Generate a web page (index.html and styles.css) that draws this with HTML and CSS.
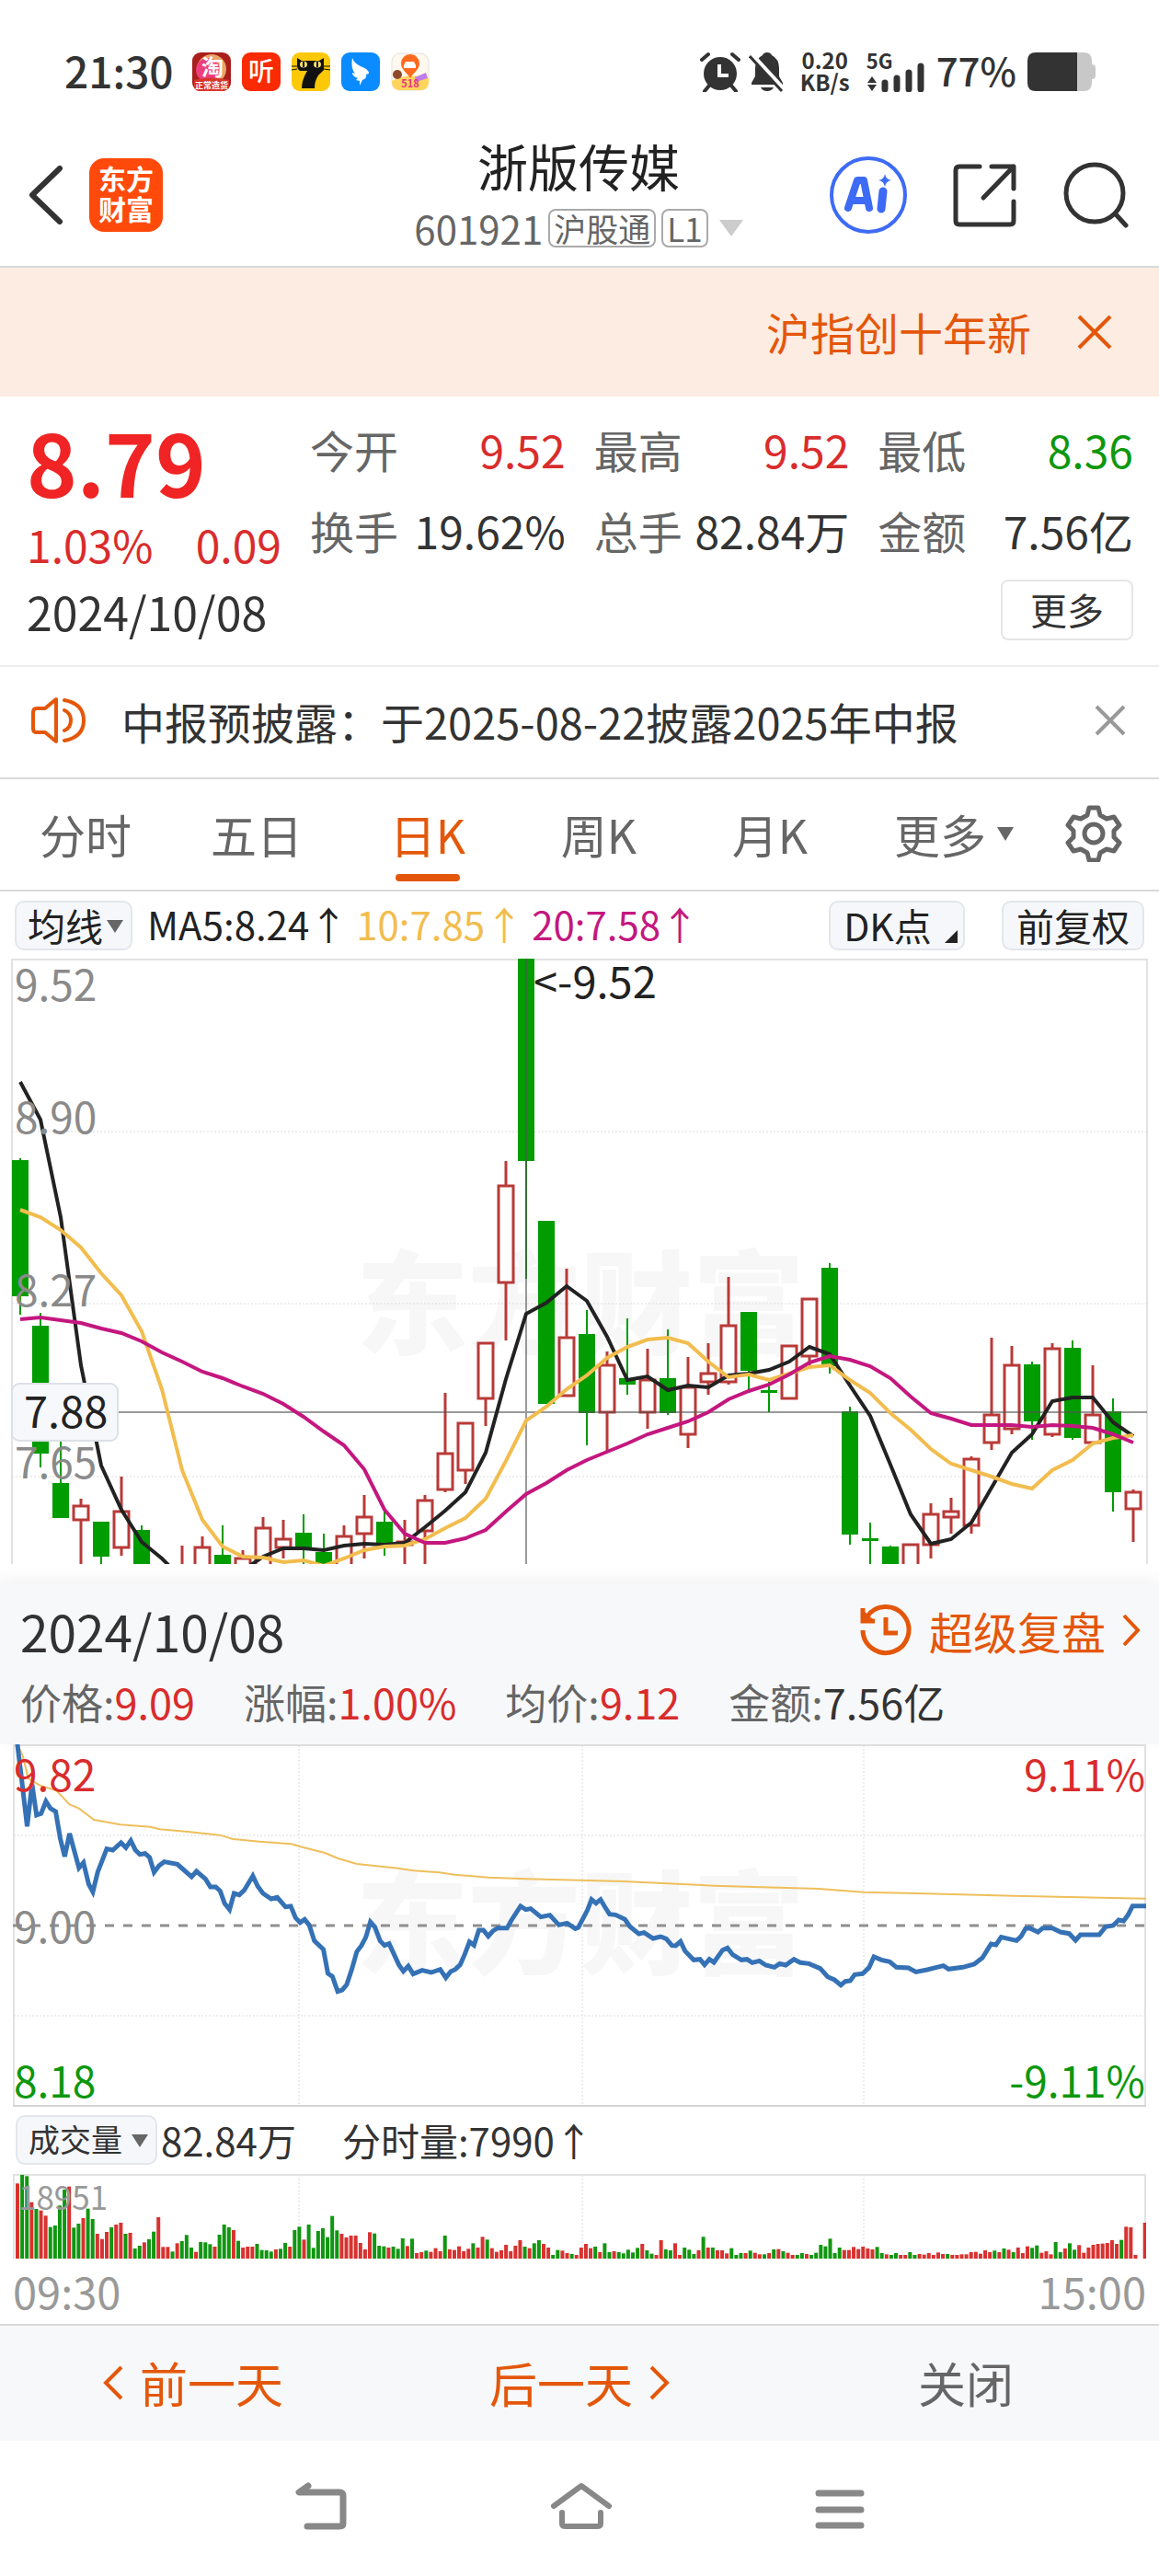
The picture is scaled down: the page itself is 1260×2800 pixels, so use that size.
FILE: index.html
```html
<!DOCTYPE html>
<html lang="zh-CN">
<head>
    <meta charset="UTF-8">
    <meta name="viewport" content="width=device-width, initial-scale=1">
    <title>浙版传媒 601921</title>
    <link rel="stylesheet" href="styles.css">
</head>
<body>

<div class="status">
    <span class="status_time">21:30</span>
    <div class="status_apps">
        <svg width="42" height="42" viewBox="0 0 42 42">
            <rect width="42" height="42" rx="9" fill="#a81f1c"/>
            <circle cx="21" cy="18" r="16" fill="#e9a46b"/>
            <circle cx="17" cy="19" r="13" fill="#ee3f7c"/>
            <path d="M2 30q19-5 38 0v8q-3 4-8 4H9q-6 0-7-4z" fill="#d8352a"/>
            <text class="app_glyph" x="22" y="25" font-size="24">淘</text>
            <text class="app_glyph" x="21" y="39" font-size="9">正常造货</text>
        </svg>
        <svg width="42" height="42" viewBox="0 0 42 42">
            <rect width="42" height="42" rx="9" fill="#fa2a05"/>
            <text class="app_glyph thin" x="21" y="31" font-size="28">听</text>
        </svg>
        <svg width="42" height="42" viewBox="0 0 42 42">
            <rect width="42" height="42" rx="9" fill="#fbc908"/>
            <path d="M6 6l5 3h19l5-3v13q-3 3-6 6-4 6-4 14H11q0-9 6-19H9q-3-2-3-5z" fill="#111"/>
            <path d="M0 15h6M0 19l6-1M35 15h7M35 18l7 1" stroke="#111"/>
            <ellipse cx="13" cy="13" rx="4" ry="3.500" fill="#f5e06a"/>
            <ellipse cx="28" cy="13" rx="4" ry="3.500" fill="#f5e06a"/>
            <path d="M13 10v6M28 10v6" stroke="#111" stroke-width="2"/>
        </svg>
        <svg width="42" height="42" viewBox="0 0 42 42">
            <rect width="42" height="42" rx="9" fill="#0a8bff"/>
            <path d="M12 6q2 6 9 9 9 3 9 8l-3 1q1 3-2 5l-2 1-3 6v-5l-4-1 2-2q-6-2-6-6l3 1q-5-6-3-17z" fill="#fff"/>
        </svg>
        <svg width="42" height="42" viewBox="0 0 42 42">
            <rect x="1" y="1" width="40" height="40" rx="9" fill="#fff8ee" stroke="#e3dfdb"/>
            <path d="M1 31q18-9 40-3v4q0 9-9 9H10q-9 0-9-9z" fill="#ffd45c"/>
            <circle cx="7" cy="24" r="5" fill="#8d4a2b"/>
            <path d="M26 27l12-5 2 6-13 4z" fill="#c07be8"/>
            <path d="M21 2c6 0 10 5 10 10 0 7-7 10-10 16-3-6-10-9-10-16 0-5 4-10 10-10z" fill="#ff6a1f"/>
            <path d="M14 14l2-4h9l2 4v3H14z" fill="#fff"/>
            <text class="app_glyph pink" x="21" y="38" font-size="11">518</text>
        </svg>
    </div>
    <div class="status_right">
        <svg width="44" height="44" viewBox="0 0 44 44">
            <circle cx="22" cy="24" r="18" fill="#333"/>
            <path d="M2 9l7-6M42 9l-7-6M10 37l-5 6M34 37l5 6" stroke="#333" stroke-width="4" stroke-linecap="round"/>
            <path d="M21 14v12h10" fill="none" stroke="#fff" stroke-width="4"/>
        </svg>
        <svg class="bell" width="40" height="44" viewBox="0 0 40 44">
            <path d="M20 1q4 0 5 3 8 4 8 14v9l4 7v2H3v-2l4-7v-9Q7 8 15 4q1-3 5-3zM13 39h14q-2 4-7 4t-7-4z" fill="#333"/>
            <path d="M3 3l35 38" stroke="#fff" stroke-width="5"/>
            <path d="M1 5l35 38" stroke="#333" stroke-width="3"/>
        </svg>
        <div class="speed"><span>0.20</span><span>KB/s</span></div>
        <div class="signal">
            <span>5G</span>
            <svg width="66" height="44" viewBox="0 0 66 44">
                <path d="M1 34l5-7 5 7zM1 36l5 7 5-7z" fill="#333"/>
                <path d="M20 34v7M33 29v12M46 23v18M59 16v25" stroke="#333" stroke-width="7" stroke-linecap="round"/>
            </svg>
        </div>
        <span class="percent">77%</span>
        <svg width="74" height="42" viewBox="0 0 74 42">
            <path d="M53 0h8q9 0 9 9v4q4 0 4 4v8q0 4-4 4v4q0 9-9 9h-8z" fill="#c8c8c8"/>
            <path d="M9 0h45v42H9q-9 0-9-9V9q0-9 9-9z" fill="#333"/>
        </svg>
    </div>
</div>

<header class="header">
    <div class="header_side">
        <button class="icon_btn" aria-label="返回">
            <svg width="40" height="64" viewBox="0 0 40 64"><path d="M35 3L5 32l30 29" fill="none" stroke="#333" stroke-width="6" stroke-linecap="round" stroke-linejoin="round"/></svg>
        </button>
        <div class="logo">东方<br>财富</div>
    </div>
    <div class="header_mid">
        <h1>浙版传媒</h1>
        <div class="code">
            <span>601921</span>
            <span class="tag">沪股通</span>
            <span class="tag">L1</span>
            <svg width="26" height="18" viewBox="0 0 26 18"><path d="M0 0h26L13 18z" fill="#ccc"/></svg>
        </div>
    </div>
    <div class="header_side right">
        <button class="icon_btn" aria-label="AI">
            <svg width="84" height="84" viewBox="0 0 84 84">
                <circle cx="42" cy="42" r="40" fill="none" stroke="#3d6bf5" stroke-width="4"/>
                <path d="M20 56l10-30h7l6 30M25 48h15" fill="none" stroke="#3d6bf5" stroke-width="8" stroke-linejoin="round" stroke-linecap="round"/>
                <path d="M58 38l-2 19" stroke="#3d6bf5" stroke-width="9" stroke-linecap="round"/>
                <path d="M60 19q1 6 7 7-6 1-7 7-1-6-7-7 6-1 7-7z" fill="#3d6bf5"/>
            </svg>
        </button>
        <button class="icon_btn" aria-label="分享">
            <svg width="70" height="70" viewBox="0 0 70 70"><path d="M29 4H7q-4 0-4 4v55q0 4 4 4h55q4 0 4-4V42M42 4h24v24M66 4L33 38" fill="none" stroke="#333" stroke-width="5" stroke-linecap="round" stroke-linejoin="round"/></svg>
        </button>
        <button class="icon_btn" aria-label="搜索">
            <svg width="72" height="72" viewBox="0 0 72 72"><circle cx="34" cy="34" r="31" fill="none" stroke="#333" stroke-width="5"/><path d="M57 57l11 12" stroke="#333" stroke-width="5" stroke-linecap="round"/></svg>
        </button>
    </div>
</header>

<div class="banner">
    <div class="banner_text">沪指创十年新</div>
    <button class="icon_btn" aria-label="关闭">
        <svg width="40" height="40" viewBox="0 0 40 40"><path d="M3 3l34 34M37 3L3 37" stroke="#e4570a" stroke-width="4"/></svg>
    </button>
</div>

<section class="quote">
    <div class="price">
        <div class="price_now">8.79</div>
        <div class="price_diff"><span>1.03%</span><span>0.09</span></div>
    </div>
    <dl class="facts">
        <div><dt>今开</dt><dd class="up">9.52</dd></div>
        <div><dt>最高</dt><dd class="up">9.52</dd></div>
        <div><dt>最低</dt><dd class="down">8.36</dd></div>
        <div><dt>换手</dt><dd>19.62%</dd></div>
        <div><dt>总手</dt><dd>82.84万</dd></div>
        <div><dt>金额</dt><dd>7.56亿</dd></div>
    </dl>
    <div class="quote_date">2024/10/08</div>
    <button class="more_btn">更多</button>
</section>

<div class="notice">
    <svg width="60" height="52" viewBox="0 0 60 52">
        <path d="M27 3v46L15 39H6q-4 0-4-4V17q0-4 4-4h9zM36 15q7 3 7 11t-7 11M36 4q21 4 21 22T36 48" fill="none" stroke="#e4570a" stroke-width="4" stroke-linejoin="round" stroke-linecap="round"/>
    </svg>
    <a href="#">中报预披露：于2025-08-22披露2025年中报</a>
    <button class="icon_btn" aria-label="关闭">
        <svg width="34" height="34" viewBox="0 0 34 34"><path d="M2 2l30 30M32 2L2 32" stroke="#999" stroke-width="4"/></svg>
    </button>
</div>

<nav class="tabs">
    <button>分时</button>
    <button>五日</button>
    <button class="active">日K</button>
    <button>周K</button>
    <button>月K</button>
    <button>更多<svg width="18" height="15" viewBox="0 0 18 15"><path d="M0 0h18L9 15z" fill="#666"/></svg></button>
    <button class="gear" aria-label="设置">
        <svg width="62" height="62" viewBox="0 0 62 62">
            <path d="M26 3h10l2 8 7 4 8-2 6 9-6 6v7l6 6-6 9-8-2-7 4-2 8H26l-2-8-7-4-8 2-6-9 6-6v-7l-6-6 6-9 8 2 7-4z" fill="none" stroke="#666" stroke-width="5" stroke-linejoin="round"/>
            <circle cx="31" cy="31" r="10" fill="none" stroke="#666" stroke-width="5"/>
        </svg>
    </button>
</nav>

<div class="ma_row">
    <label class="picker">
        <select aria-label="指标"><option>均线</option></select>
    </label>
    <div class="ma_list"><span>MA5:8.24↑</span><span class="ma10">10:7.85↑</span><span class="ma20">20:7.58↑</span></div>
    <button class="chip corner">DK点</button>
    <button class="chip">前复权</button>
</div>

<svg class="chart kline" viewBox="0 0 1236 658">
    <text class="watermark" x="619" y="420">东方财富</text>
    <path class="frame" d="M1 658V1h1234v657"/>
    <path class="grid" d="M1 188h1234M1 375h1234M1 563h1234"/>
    <g id="candles"></g>
    <path class="cross" d="M1 493h1234M560 0v658"/>
    <g id="ma"></g>
    <g class="axis">
        <text x="4" y="46">9.52</text>
        <text x="4" y="190">8.90</text>
        <text x="4" y="378">8.27</text>
        <text x="4" y="565">7.65</text>
    </g>
    <text class="peak" x="568" y="43">&lt;-9.52</text>
    <rect class="cross_box" x="1" y="462" width="115" height="62" rx="8"/>
    <text class="peak" x="14" y="510">7.88</text>
</svg>

<section class="replay">
    <div class="replay_head">
        <span class="replay_date">2024/10/08</span>
        <a href="#">
            <svg width="58" height="58" viewBox="0 0 58 58">
                <path d="M8 15A25 25 0 1 1 4 29M4 5v14h13M29 15v17h13" fill="none" stroke="#e4570a" stroke-width="5"/>
                <path d="M3 6l14 13H3z" fill="#e4570a"/>
            </svg>
            <span>超级复盘</span>
            <svg width="20" height="36" viewBox="0 0 20 36"><path d="M2 2l15 16L2 34" fill="none" stroke="#e4570a" stroke-width="4"/></svg>
        </a>
    </div>
    <div class="replay_stats">
        <span>价格:<b class="up">9.09</b></span>
        <span>涨幅:<b class="up">1.00%</b></span>
        <span>均价:<b class="up">9.12</b></span>
        <span>金额:<b>7.56亿</b></span>
    </div>
</section>

<svg class="chart minute" viewBox="0 0 1232 394">
    <text class="watermark" x="617" y="240">东方财富</text>
    <path class="frame" d="M1 394V1h1230v393"/>
    <path class="frame base" d="M0 393h1232"/>
    <path class="grid" d="M1 99h1230M1 295h1230M311 1v392M619 1v392M925 1v392"/>
    <path class="mid" d="M0 197h1232"/>
    <svg width="1232" height="394" viewBox="34 49 3018 1182" preserveAspectRatio="none">
        <polyline class="avg" points="46,49 60,85 75,160 105,182 150,200 185,245 210,258 250,295 320,311 400,318 425,326 500,334 585,345 620,358 690,366 775,374 800,383 865,403 900,421 950,439 1060,453 1100,461 1170,467 1210,474 1300,483 1400,488 1568,493 1660,496 1900,510 2180,520 2300,531 2700,543 3052,552"/>
        <polyline class="now" points="46,49 59,180 72,317 85,178 97,280 109,275 122,235 134,258 148,268 160,355 172,415 185,340 210,452 222,435 236,505 247,530 260,465 284,390 300,394 322,370 335,386 348,363 360,393 372,408 386,405 398,418 410,466 423,445 437,432 472,440 485,454 510,481 523,463 547,488 560,514 574,514 586,527 598,568 611,588 623,535 637,540 650,525 673,478 686,512 700,535 722,553 738,548 760,579 774,577 787,615 799,630 811,620 823,638 837,690 861,718 873,796 885,806 899,855 911,850 923,833 936,785 950,725 962,706 974,678 986,628 998,645 1012,690 1024,705 1036,699 1062,768 1074,789 1087,772 1100,798 1124,786 1148,793 1172,783 1187,810 1200,790 1212,783 1225,768 1237,735 1250,693 1262,704 1275,655 1287,655 1300,675 1312,658 1325,648 1350,648 1362,622 1386,577 1400,588 1413,585 1440,612 1464,606 1488,638 1510,632 1532,650 1540,646 1564,590 1575,555 1587,567 1599,555 1611,580 1623,603 1639,605 1664,620 1677,643 1701,667 1715,663 1739,682 1759,676 1774,683 1789,705 1799,706 1812,692 1824,723 1847,752 1864,750 1876,768 1889,750 1901,760 1924,720 1937,713 1951,735 1974,752 1989,750 2003,761 2022,755 2039,769 2062,776 2076,764 2092,769 2114,750 2131,761 2154,764 2184,780 2204,807 2222,817 2239,834 2251,822 2264,820 2276,800 2297,797 2314,777 2327,742 2347,752 2369,758 2387,776 2419,778 2439,791 2469,784 2512,771 2526,782 2564,776 2594,766 2616,745 2639,700 2652,703 2666,678 2707,689 2719,675 2731,650 2741,648 2764,661 2777,648 2802,648 2824,661 2847,666 2864,688 2877,670 2927,670 2944,644 2964,640 2979,622 2992,625 3004,605 3016,576 3052,576"/>
    </svg>
    <g class="axis">
        <text class="up" x="1" y="51">9.82</text>
        <text x="1" y="216">9.00</text>
        <text class="down" x="1" y="384">8.18</text>
        <text class="up end" x="1231" y="51">9.11%</text>
        <text class="down end" x="1231" y="384">-9.11%</text>
    </g>
</svg>

<div class="vol_row">
    <label class="picker small">
        <select aria-label="副图"><option>成交量</option></select>
    </label>
    <span class="vol_total">82.84万</span>
    <span>分时量:7990↑</span>
</div>

<svg class="chart volume" viewBox="0 0 1232 92">
    <path class="frame" d="M1 92V1h1230v91"/>
    <path class="grid" d="M311 1v91M619 1v91M925 1v91"/>
    <g id="volume"></g>
    <text class="vol_max" x="6" y="39">18951</text>
</svg>
<div class="times"><span>09:30</span><span>15:00</span></div>

<div class="pager">
    <button><svg width="22" height="38" viewBox="0 0 22 38"><path d="M20 2L3 19l17 17" fill="none" stroke="#e4570a" stroke-width="4"/></svg>前一天</button>
    <button>后一天<svg width="22" height="38" viewBox="0 0 22 38"><path d="M2 2l17 17L2 36" fill="none" stroke="#e4570a" stroke-width="4"/></svg></button>
    <button class="close">关闭</button>
</div>

<div class="sys_nav">
    <button class="icon_btn" aria-label="后退"><svg width="58" height="52" viewBox="0 0 58 52"><path d="M15 4L5 11h44q4 0 4 4v30q0 3-4 3H14" fill="none" stroke="#888" stroke-width="7" stroke-linecap="round" stroke-linejoin="round"/></svg></button>
    <button class="icon_btn" aria-label="主页"><svg width="68" height="52" viewBox="0 0 68 52"><path d="M4 26L34 4l30 22M13 33v12q0 3 4 3h34q4 0 4-3V33" fill="none" stroke="#888" stroke-width="6" stroke-linecap="round" stroke-linejoin="round"/></svg></button>
    <button class="icon_btn" aria-label="任务"><svg width="54" height="52" viewBox="0 0 54 52"><path d="M4 12h46M4 30h46M4 47h46" stroke="#888" stroke-width="7" stroke-linecap="round"/></svg></button>
</div>

<script src="script.js"></script>
</body>
</html>
```
FILE: styles.css
```css
* {
    box-sizing: border-box;
}
body {
    margin: 0;
    background: #fff;
    color: #333;
    font-family: "Noto Sans CJK SC", "Noto Sans", sans-serif;
    font-size: 48px;
    line-height: 1;
}
button, select {
    font: inherit;
    color: inherit;
    background: none;
    border: 0;
    padding: 0;
    cursor: pointer;
}
a {
    color: inherit;
    text-decoration: none;
}
svg {
    display: block;
    flex: none;
}
.icon_btn {
    display: flex;
}
.up {
    color: #d92c2c;
    fill: #d92c2c;
}
.down {
    color: #0d970d;
    fill: #0d970d;
}

/* status bar */
.status {
    display: flex;
    align-items: center;
    height: 156px;
    padding: 0 69px 0 70px;
}
.status_time {
    padding-bottom: 4px;
    font-size: 46px;
    font-weight: 500;
}
.status_apps {
    display: flex;
    gap: 12px;
    margin-left: 20px;
}
.app_glyph {
    fill: #fff;
    text-anchor: middle;
    font-weight: 700;
}
.app_glyph.thin {
    font-weight: 500;
}
.app_glyph.pink {
    fill: #e8337d;
}
.status_right {
    display: flex;
    align-items: center;
    margin-left: auto;
}
.bell {
    margin: 0 16px 0 9px;
}
.speed {
    display: flex;
    flex-direction: column;
    font-size: 24px;
    font-weight: 700;
    margin-right: 18px;
    padding-bottom: 2px;
    text-align: center;
}
.signal {
    position: relative;
}
.signal span {
    position: absolute;
    left: 0;
    top: -2px;
    font-size: 22px;
    font-weight: 700;
}
.percent {
    padding-bottom: 4px;
    font-size: 42px;
    font-weight: 500;
    margin: 0 12px 0 10px;
}

/* header */
.header {
    display: grid;
    grid-template-columns: 1fr auto 1fr;
    height: 135px;
    padding: 0 32px 0 30px;
    border-bottom: 2px solid #d9d9d9;
}
.header_side {
    display: flex;
    align-items: center;
    align-self: start;
    gap: 27px;
    height: 112px;
}
.header_side.right {
    justify-content: flex-end;
    gap: 50px;
}
.logo {
    width: 80px;
    height: 80px;
    padding-top: 5px;
    border-radius: 16px;
    background: #ff4a0c;
    color: #fff;
    font-size: 30px;
    line-height: 33px;
    font-weight: 700;
    text-align: center;
}
.header_mid {
    margin-top: -5px;
    text-align: center;
}
h1 {
    margin: 0;
    font-size: 55px;
    line-height: 56px;
    font-weight: 400;
    color: #222;
}
.code {
    display: flex;
    align-items: center;
    justify-content: center;
    gap: 6px;
    margin-top: 20px;
    font-size: 42px;
    color: #666;
}
.code svg {
    margin-left: 6px;
}
.tag {
    padding: 0 4px;
    border: 2px solid #aaa;
    border-radius: 8px;
    font-size: 35px;
    line-height: 38px;
}

.banner {
    display: flex;
    align-items: center;
    justify-content: flex-end;
    gap: 49px;
    height: 140px;
    padding-right: 50px;
    background: #fcece2;
    color: #e4570a;
}
.banner_text {
    padding-bottom: 3px;
    line-height: 64px;
}

/* quote */
.quote {
    display: grid;
    grid-template-columns: 277px 1fr;
    column-gap: 31px;
    padding: 18px 28px 25px 29px;
    border-bottom: 2px solid #ececec;
}
.price_now {
    color: #f02424;
    font-size: 93px;
    font-weight: 700;
    line-height: 104px;
}
.price_diff {
    display: flex;
    justify-content: space-between;
    margin-top: 10px;
    line-height: 56px;
    color: #d92c2c;
}
.facts {
    display: grid;
    grid-template-columns: repeat(3, 1fr);
    column-gap: 31px;
    align-content: start;
    margin: 0;
    line-height: 88px;
}
.facts div {
    display: flex;
    justify-content: space-between;
    white-space: nowrap;
    margin-top: -5px;
    margin-bottom: 5px;
}
dt {
    color: #666;
}
dd {
    margin: 0;
}
.quote_date {
    font-size: 50px;
    line-height: 68px;
    margin-top: 5px;
}
.more_btn {
    justify-self: end;
    width: 144px;
    height: 66px;
    margin-top: 5px;
    padding-bottom: 2px;
    border: 2px solid #e6e6e6;
    border-radius: 8px;
    font-size: 40px;
}

.notice {
    display: flex;
    align-items: center;
    height: 122px;
    padding: 0 36px 4px 34px;
    border-bottom: 2px solid #d9d9d9;
    font-size: 47px;
}
.notice a {
    flex: 1;
    margin-left: 38px;
}

/* tabs */
.tabs {
    display: grid;
    grid-template-columns: repeat(5, 186fr) 214fr 116fr;
    height: 122px;
    border-bottom: 2px solid #d9d9d9;
    color: #666;
    font-size: 50px;
}
.tabs button {
    position: relative;
    display: flex;
    align-items: center;
    justify-content: center;
    gap: 12px;
    padding-bottom: 2px;
}
.tabs .active {
    color: #e4570a;
}
.tabs .active:after {
    content: '';
    position: absolute;
    bottom: 9px;
    left: 50%;
    width: 70px;
    height: 8px;
    margin-left: -35px;
    border-radius: 4px;
    background: #e4570a;
}
.tabs .gear {
    justify-content: flex-start;
    padding-left: 14px;
}

/* indicator row */
.ma_row {
    display: flex;
    align-items: center;
    height: 73px;
    padding: 0 16px;
    font-size: 42px;
    color: #222;
}
.picker {
    position: relative;
    width: 128px;
}
.picker select, .chip {
    display: block;
    width: 100%;
    height: 54px;
    padding: 0 12px 2px;
    appearance: none;
    border: 2px solid #e3e6eb;
    border-radius: 10px;
    background: #f6f7fa;
    font-size: 41px;
    line-height: 48px;
}
.picker:after {
    content: '';
    position: absolute;
    right: 10px;
    top: 21px;
    border: 9px solid transparent;
    border-top: 14px solid #666;
    border-bottom: 0;
    pointer-events: none;
}
.picker.small {
    width: 154px;
}
.picker.small select {
    font-size: 34px;
}
.ma_list {
    display: flex;
    gap: 9px;
    flex: 1;
    margin-left: 16px;
    padding-bottom: 3px;
    white-space: nowrap;
}
.ma10 {
    color: #f2bd4e;
}
.ma20 {
    color: #c4177f;
}
.chip {
    width: 155px;
    padding: 0 0 2px;
}
.chip.corner {
    position: relative;
    width: 148px;
    margin-right: 40px;
    padding-right: 20px;
}
.corner:after {
    content: '';
    position: absolute;
    right: 6px;
    bottom: 6px;
    border: 7px solid #222;
    border-top-color: transparent;
    border-left-color: transparent;
}

/* charts */
.chart {
    height: auto;
}
.kline {
    width: calc(100% - 24px);
    margin: 0 12px;
}
.minute, .volume {
    width: calc(100% - 28px);
    margin: 0 14px;
}
.frame {
    fill: none;
    stroke: #e2e2e2;
    stroke-width: 2;
}
.frame.base {
    stroke: #d4d4d4;
}
.grid {
    stroke: #dcdcdc;
    stroke-dasharray: 2 2;
}
.cross {
    stroke: #555;
    stroke-opacity: .6;
    stroke-width: 2;
}
.cross_box {
    fill: #f6f8fb;
    stroke: #dde0e5;
    stroke-width: 2;
}
.watermark {
    fill: #f7f7f7;
    font-size: 122px;
    font-weight: 900;
    text-anchor: middle;
}
.axis text {
    font-size: 46px;
}
.axis {
    fill: #8a8a8a;
}
.axis .end {
    text-anchor: end;
}
.peak {
    font-size: 47px;
    fill: #222;
}
.rise {
    fill: #fff;
    stroke: #b83a38;
    stroke-width: 3;
}
.fall {
    fill: #009c00;
    stroke: #009c00;
    stroke-width: 2;
}
.line {
    fill: none;
    stroke-width: 4;
}
.avg, .now {
    fill: none;
    vector-effect: non-scaling-stroke;
}
.avg {
    stroke: #eebf5c;
    stroke-width: 2;
}
.now {
    stroke: #3571b5;
    stroke-width: 5;
}
.mid {
    stroke: #8f8f8f;
    stroke-width: 3;
    stroke-dasharray: 10 10;
}
.vol_max {
    font-size: 35px;
    fill: #999;
}

/* replay panel */
.replay {
    position: relative;
    margin-top: 21px;
    height: 175px;
    padding: 20px 20px 0 22px;
    background: #f7f8fa;
    box-shadow: 0 -4px 16px rgba(0, 0, 0, .06);
}
.replay_head {
    display: flex;
    align-items: center;
    justify-content: space-between;
    height: 62px;
}
.replay_date {
    font-size: 55px;
}
.replay_head a {
    display: flex;
    align-items: center;
    gap: 18px;
    color: #e4570a;
}
.replay_stats {
    display: flex;
    gap: 53px;
    margin-top: 15px;
    font-size: 45px;
    line-height: 64px;
    color: #666;
}
.replay_stats b {
    font-weight: 400;
}
.replay_stats b:not(.up) {
    color: #333;
}

.vol_row {
    display: flex;
    align-items: center;
    height: 73px;
    padding: 0 17px 2px;
    font-size: 42px;
}
.vol_total {
    margin: 0 50px 0 4px;
}
.times {
    display: flex;
    justify-content: space-between;
    height: 71px;
    padding: 0 14px;
    line-height: 70px;
    font-size: 47px;
    color: #999;
}

.pager {
    display: grid;
    grid-template-columns: repeat(3, 1fr);
    height: 127px;
    border-top: 2px solid #d9d9d9;
    background: #f7f8fa;
    color: #e4570a;
    font-size: 52px;
}
.pager button {
    display: flex;
    align-items: center;
    justify-content: center;
    gap: 18px;
    padding-bottom: 2px;
}
.pager .close {
    color: #666;
}
.sys_nav {
    display: flex;
    align-items: center;
    justify-content: center;
    gap: 220px;
    height: 142px;
}
```
FILE: script.js
```js
const NS = 'http://www.w3.org/2000/svg';

function add(parent, tag, attrs) {
    let el = document.createElementNS(NS, tag);
    for (let key in attrs) {
        el.setAttribute(key, attrs[key]);
    }
    parent.appendChild(el);
}

// daily candles: direction, high, body top, body bottom, low (ticks down from the top edge)
const candles = [
    ['g', 527, 534, 872, 920], ['g', 914, 949, 1266, 1302], ['g', 1200, 1344, 1426, 1426],
    ['r', 1380, 1399, 1434, 1560], ['g', 1440, 1441, 1523, 1560], ['r', 1324, 1413, 1503, 1524],
    ['g', 1448, 1462, 1600, 1600], ['r', 1600, 1600, 1610, 1610], ['r', 1497, 1600, 1610, 1610],
    ['r', 1476, 1503, 1600, 1600], ['g', 1448, 1524, 1600, 1600], ['r', 1510, 1530, 1600, 1600],
    ['r', 1427, 1455, 1600, 1600], ['r', 1434, 1483, 1503, 1530], ['g', 1420, 1469, 1505, 1560],
    ['g', 1469, 1517, 1600, 1600], ['r', 1448, 1475, 1600, 1600], ['r', 1372, 1427, 1469, 1530],
    ['g', 1407, 1441, 1488, 1524], ['r', 1434, 1488, 1496, 1560], ['r', 1372, 1386, 1462, 1560],
    ['r', 1116, 1268, 1358, 1365], ['r', 1190, 1192, 1309, 1343], ['r', 990, 991, 1130, 1198],
    ['r', 534, 596, 838, 984], ['g', 28, 28, 532, 830], ['g', 685, 686, 1141, 1143],
    ['r', 803, 977, 1123, 1123], ['g', 908, 970, 1163, 1246], ['r', 1011, 1047, 1163, 1262],
    ['g', 928, 1081, 1092, 1121], ['r', 1004, 1082, 1163, 1205], ['g', 956, 1081, 1163, 1170],
    ['r', 1025, 1102, 1220, 1253], ['r', 990, 1067, 1088, 1121], ['r', 824, 948, 1088, 1094],
    ['g', 913, 914, 1058, 1108], ['g', 1088, 1110, 1113, 1163], ['r', 997, 997, 1130, 1130],
    ['r', 878, 880, 1024, 1047], ['g', 790, 803, 1046, 1067], ['g', 1150, 1163, 1468, 1496],
    ['g', 1441, 1481, 1484, 1560], ['g', 1497, 1503, 1600, 1600], ['r', 1495, 1496, 1600, 1600],
    ['r', 1393, 1420, 1496, 1530], ['r', 1379, 1413, 1427, 1469], ['r', 1275, 1281, 1448, 1469],
    ['r', 976, 1170, 1240, 1259], ['r', 997, 1046, 1206, 1219], ['g', 1038, 1046, 1184, 1232],
    ['r', 991, 1004, 1220, 1227], ['g', 983, 1004, 1225, 1233], ['r', 1046, 1171, 1240, 1240],
    ['g', 1130, 1163, 1363, 1413], ['r', 1358, 1364, 1406, 1489]
];

const averages = {
    '#222222': [335, 430, 675, 1045, 1297, 1407, 1488, 1530, 1580, 1600, 1600, 1560, 1525, 1504, 1505, 1509, 1498, 1494, 1495, 1490, 1452, 1411, 1365, 1265, 1080, 916, 890, 848, 884, 974, 1084, 1073, 1109, 1098, 1102, 1072, 1067, 1058, 1037, 1000, 1019, 1098, 1173, 1295, 1419, 1494, 1482, 1441, 1353, 1266, 1219, 1137, 1127, 1127, 1190, 1223],
    '#f2bd4e': [657, 675, 708, 751, 816, 871, 960, 1105, 1310, 1433, 1500, 1526, 1529, 1539, 1536, 1549, 1531, 1510, 1500, 1498, 1482, 1455, 1429, 1380, 1286, 1184, 1151, 1107, 1072, 1028, 1000, 982, 978, 990, 1037, 1077, 1070, 1083, 1068, 1051, 1046, 1083, 1116, 1166, 1208, 1256, 1292, 1308, 1326, 1343, 1355, 1310, 1284, 1242, 1228, 1222],
    '#c4177f': [931, 926, 933, 940, 955, 965, 987, 1013, 1038, 1063, 1079, 1100, 1118, 1144, 1176, 1212, 1246, 1307, 1407, 1467, 1491, 1491, 1479, 1459, 1413, 1369, 1342, 1308, 1284, 1263, 1241, 1218, 1203, 1186, 1163, 1131, 1110, 1094, 1070, 1039, 1023, 1032, 1048, 1078, 1124, 1167, 1181, 1195, 1196, 1196, 1200, 1197, 1199, 1203, 1218, 1239]
};

const x = i => 10 + i * 22;
const y = v => Math.round((v - 27) * 0.4337);

let box = document.querySelector('#candles');
candles.forEach(function ([dir, high, top, bottom, low], i) {
    let cls = dir === 'r' ? 'rise' : 'fall';
    add(box, 'path', {class: cls, d: `M${x(i)} ${y(high)}V${y(low)}`});
    add(box, 'rect', {class: cls, x: x(i) - 8, y: y(top), width: 16, height: Math.max(y(bottom) - y(top), 1)});
});

let ma = document.querySelector('#ma');
for (let color in averages) {
    let points = averages[color].map((v, i) => x(i) + ',' + y(v)).join(' ');
    add(ma, 'polyline', {class: 'line', stroke: color, points: points});
}

// one bar per minute: colour + top of the bar, baseline is 525
const volume = 'r280 g252 g256 r341 g363 r368 r385 g422 g417 g352 g300 r290 g424 g411 r393 g362 g396 r444 r461 r438 g423 r414 r408 g444 r441 g492 g483 r472 g462 g437 r390 r487 r487 g502 r475 g468 g448 g489 r503 g471 g472 g478 r486 g447 g414 g423 r432 g467 r489 r486 r486 g477 g497 g498 g502 r495 g493 g474 r486 g432 g421 r463 g414 g490 g435 g426 g455 g386 g433 r444 r456 r450 r450 r474 r495 r439 g443 g483 g485 r489 g486 g493 g459 r484 g460 r507 r504 g499 r503 r491 r501 g450 r495 r497 r485 r501 r493 g475 r489 r454 g463 r491 r503 r498 r480 r501 r483 r465 g486 r491 g475 g465 r477 r489 g513 g497 r499 r507 g510 r513 r489 r477 r491 g486 r504 g475 g504 r501 g504 g508 g496 g505 g490 r477 g498 g509 r513 r465 g495 g498 r475 r513 g489 g496 g510 r498 g454 r489 g489 r498 r498 r508 g491 g513 g507 r507 g499 r506 r511 g511 r507 g495 r494 g501 r506 r513 g513 g507 r510 g513 g506 g480 g485 g460 g507 g489 r497 r497 r487 r494 r486 r492 r495 g487 g507 r511 g513 g507 r513 r513 g504 g513 r510 r512 r507 r513 r505 r510 g510 r513 r513 r511 r511 r504 r503 r509 r498 r504 g499 r504 g492 r496 g504 r489 r507 r485 g490 g482 r506 r501 r511 g471 g504 r492 g475 g496 r481 r506 r489 r480 r477 r476 r474 r465 r477 g464 r421 r423 r513 r525 r408';

let bars = document.querySelector('#volume');
volume.split(' ').forEach(function (bar, i) {
    let h = (525 - bar.slice(1)) / 3;
    add(bars, 'rect', {
        x: 3 + i * 5.107,
        y: 92 - h,
        width: 4,
        height: h,
        fill: bar[0] === 'r' ? '#d83230' : '#119611'
    });
});
```
